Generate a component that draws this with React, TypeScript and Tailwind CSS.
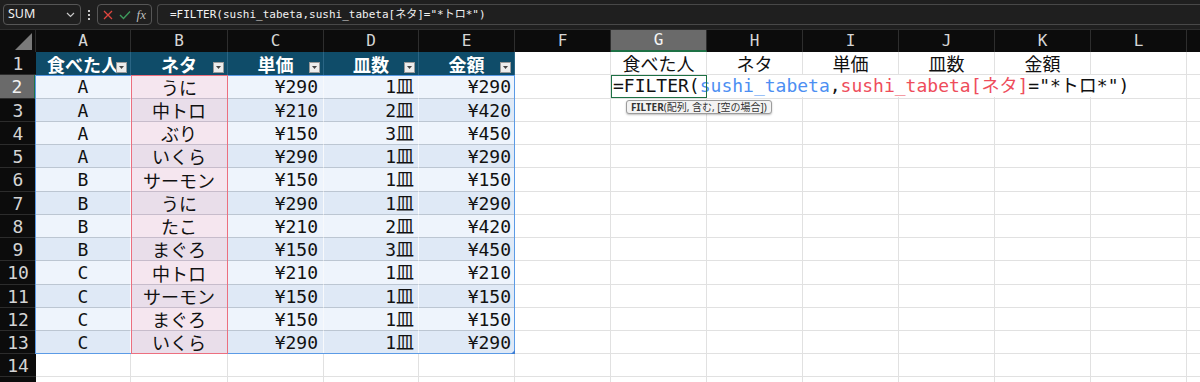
import React from 'react';

const mono = "font-['DejaVu_Sans_Mono','Noto_Sans_CJK_JP',monospace]";
const jp = "font-['Noto_Sans_CJK_JP','Noto_Sans',sans-serif]";

const W = [
  'w-[95px]', 'w-[97px]', 'w-[96px]', 'w-[95px]', 'w-[96px]', 'w-[96px]',
  'w-[96px]', 'w-[96px]', 'w-[96px]', 'w-[96px]', 'w-[96px]', 'w-[96px]',
];
const LETTERS = ['A', 'B', 'C', 'D', 'E', 'F', 'G', 'H', 'I', 'J', 'K', 'L'];

const DATA: [string, string, string, string, string][] = [
  ['A', 'うに', '¥290', '1皿', '¥290'],
  ['A', '中トロ', '¥210', '2皿', '¥420'],
  ['A', 'ぶり', '¥150', '3皿', '¥450'],
  ['A', 'いくら', '¥290', '1皿', '¥290'],
  ['B', 'サーモン', '¥150', '1皿', '¥150'],
  ['B', 'うに', '¥290', '1皿', '¥290'],
  ['B', 'たこ', '¥210', '2皿', '¥420'],
  ['B', 'まぐろ', '¥150', '3皿', '¥450'],
  ['C', '中トロ', '¥210', '1皿', '¥210'],
  ['C', 'サーモン', '¥150', '1皿', '¥150'],
  ['C', 'まぐろ', '¥150', '1皿', '¥150'],
  ['C', 'いくら', '¥290', '1皿', '¥290'],
];

const HEADERS = ['食べた人', 'ネタ', '単価', '皿数', '金額'];

const ROW_H = [
  'h-[23px]', 'h-[24px]', 'h-[23px]', 'h-[23px]', 'h-[23px]', 'h-[24px]', 'h-[23px]',
  'h-[23px]', 'h-[23px]', 'h-[24px]', 'h-[23px]', 'h-[23px]', 'h-[23px]', 'h-[23px]', 'h-[23px]',
];

function RowHeader({ n, active }: { n: number; active?: boolean }) {
  return (
    <div
      className={`w-[36px] shrink-0 flex items-center justify-center text-[18px] ${mono} ${
        active ? 'bg-[#6a6a6a] text-[#f2f2f2] border-r-2 border-r-[#1e7145]' : 'bg-[#0c0c0c] text-[#d4d4d4]'
      } border-b border-b-[#2c2c2c]`}
    >
      {n}
    </div>
  );
}

function FilterBtn() {
  return (
    <div className="absolute right-[3px] bottom-[2px] w-[11px] h-[11px] bg-[#ececec] border border-[#9a9a9a] flex items-center justify-center">
      <svg width="5" height="3" viewBox="0 0 5 3">
        <path d="M0 0 L5 0 L2.5 3 Z" fill="#444" />
      </svg>
    </div>
  );
}

function EmptyCell({ i }: { i: number }) {
  return <div className={`${W[i]} shrink-0 border-r border-b border-[#e1e1e1] bg-white`} />;
}

export default function App() {
  return (
    <div className="w-[1200px] h-[382px] overflow-hidden bg-white relative">
      {/* Formula bar */}
      <div className="h-[30px] bg-[#1f1f1f] flex items-center border-b border-[#2e2e2e]">
        <div className="ml-[3px] w-[78px] h-[21px] border border-[#565656] rounded-[4px] flex items-center justify-between px-[4px]">
          <span className="text-[12.5px] text-[#f0f0f0] font-['Noto_Sans',sans-serif] leading-none">SUM</span>
          <svg width="9" height="6" viewBox="0 0 9 6" className="mr-[1px]">
            <path d="M1 1 L4.5 4.5 L8 1" stroke="#c8c8c8" strokeWidth="1.2" fill="none" />
          </svg>
        </div>
        <div className="w-[16px] flex flex-col items-center justify-center gap-[2px]">
          <div className="w-[2px] h-[2px] bg-[#c8c8c8]" />
          <div className="w-[2px] h-[2px] bg-[#c8c8c8]" />
          <div className="w-[2px] h-[2px] bg-[#c8c8c8]" />
        </div>
        <div className="w-[55px] h-[21px] border border-[#565656] rounded-[4px] flex items-center justify-between px-[5px]">
          <svg width="10" height="10" viewBox="0 0 10 10">
            <path d="M1 1 L9 9 M9 1 L1 9" stroke="#e0463f" strokeWidth="1.3" />
          </svg>
          <svg width="12" height="10" viewBox="0 0 12 10">
            <path d="M1 5 L4.5 8.5 L11 1.5" stroke="#3e9a5c" strokeWidth="1.4" fill="none" />
          </svg>
          <span className="text-[13px] italic text-[#bdbdbd] font-['Liberation_Serif',serif] leading-none">fx</span>
        </div>
        <div className="ml-[5px] flex-1 h-[21px] border border-[#484848] rounded-l-[4px] border-r-0 flex items-center pl-[12px]">
          <span className={`text-[11px] text-[#f2f2f2] ${mono} whitespace-nowrap leading-none`}>
            =FILTER(sushi_tabeta,sushi_tabeta[ネタ]="*トロ*")
          </span>
        </div>
      </div>

      {/* Column headers */}
      <div className="h-[22px] flex bg-[#0c0c0c]">
        <div className="w-[36px] shrink-0 flex items-end justify-end pr-[3px] pb-[2px] border-r border-[#2c2c2c]">
          <svg width="17" height="17" viewBox="0 0 17 17">
            <path d="M17 0 L17 17 L0 17 Z" fill="#7a7a7a" />
          </svg>
        </div>
        {LETTERS.map((l, i) => (
          <div
            key={l}
            className={`${W[i]} shrink-0 flex items-center justify-center text-[16px] ${mono} border-r border-[#2e2e2e] ${
              l === 'G' ? 'bg-[#6a6a6a] text-[#f5f5f5] border-b-2 border-b-[#1e7145]' : 'text-[#d6d6d6]'
            }`}
          >
            {l}
          </div>
        ))}
        <div className="flex-1" />
      </div>

      {/* Grid rows */}
      <div className="relative">
        {/* Row 1 */}
        <div className={`flex ${ROW_H[0]}`}>
          <RowHeader n={1} />
          {HEADERS.map((h, i) => (
            <div
              key={h}
              className={`${W[i]} shrink-0 relative bg-[#0f4c69] text-white font-bold text-[18px] ${jp} flex items-center justify-center border-r border-[#2a6584] leading-none`}
            >
              {h}
              <FilterBtn />
            </div>
          ))}
          <EmptyCell i={5} />
          {HEADERS.map((h, i) => (
            <div
              key={'g' + h}
              className={`${W[i + 6]} shrink-0 flex items-center justify-center text-[18px] ${jp} text-[#111] border-r border-b border-[#e1e1e1] leading-none`}
            >
              {h}
            </div>
          ))}
          <EmptyCell i={11} />
          <div className="flex-1 border-b border-[#e1e1e1]" />
        </div>

        {/* Data rows */}
        {DATA.map((row, r) => {
          const light = r % 2 === 0;
          const bg = light ? 'bg-[#eef4fc]' : 'bg-[#dfe9f6]';
          const pink = light ? 'bg-[#f5e6ef]' : 'bg-[#e9deea]';
          const rowNum = r + 2;
          return (
            <div key={r} className={`flex ${ROW_H[r + 1]}`}>
              <RowHeader n={rowNum} active={rowNum === 2} />
              <div className={`${W[0]} shrink-0 ${bg} flex items-center justify-center text-[18px] ${mono} text-[#111] border-r border-r-[#f7f9fc] border-b border-b-[#bcc6d2]`}>
                {row[0]}
              </div>
              <div className={`${W[1]} shrink-0 ${pink} flex items-center justify-center text-[18px] ${jp} text-[#111] border-r border-r-[#f7f9fc] border-b border-b-[#c7bccb] leading-none`}>
                {row[1]}
              </div>
              <div className={`${W[2]} shrink-0 ${bg} flex items-center justify-end pr-[5px] text-[18px] ${mono} text-[#111] border-r border-r-[#f7f9fc] border-b border-b-[#bcc6d2]`}>
                {row[2]}
              </div>
              <div className={`${W[3]} shrink-0 ${bg} flex items-center justify-end pr-[4px] text-[18px] ${mono} text-[#111] border-r border-r-[#f7f9fc] border-b border-b-[#bcc6d2]`}>
                {row[3]}
              </div>
              <div className={`${W[4]} shrink-0 ${bg} flex items-center justify-end pr-[4px] text-[18px] ${mono} text-[#111] border-b border-b-[#bcc6d2]`}>
                {row[4]}
              </div>
              <EmptyCell i={5} />
              {rowNum === 2 ? (
                <div className={`${W[6]} shrink-0 relative border-b border-[#e1e1e1]`}>
                  <div className="absolute inset-0 border-[1.5px] border-[#1e7145] z-20 pointer-events-none" />
                  <div className={`absolute left-[1px] top-0 bottom-[1px] z-10 bg-white flex items-center pl-[1px] pr-[4px] whitespace-nowrap text-[18px] ${mono} text-[#111] leading-none`}>
                    <span>=FILTER(</span>
                    <span className="text-[#4d8ff2]">sushi_tabeta</span>
                    <span>,</span>
                    <span className="text-[#ee4d5b]">sushi_tabeta[ネタ]</span>
                    <span>="*トロ*")</span>
                  </div>
                </div>
              ) : (
                <EmptyCell i={6} />
              )}
              {[7, 8, 9, 10, 11].map((i) => (
                <EmptyCell key={i} i={i} />
              ))}
              <div className="flex-1 border-b border-[#e1e1e1]" />
            </div>
          );
        })}

        {/* Rows 14-15 */}
        {[14, 15].map((n) => (
          <div key={n} className={`flex ${ROW_H[n - 1]}`}>
            <RowHeader n={n} />
            {LETTERS.map((l, i) => (
              <EmptyCell key={l} i={i} />
            ))}
            <div className="flex-1 border-b border-[#e1e1e1]" />
          </div>
        ))}

        {/* Reference highlights */}
        <div className="absolute left-[35px] top-[23px] w-[480px] h-[279px] border border-[#5b9be6] pointer-events-none" />
        <div className="absolute left-[131px] top-[23px] w-[97px] h-[279px] border border-[#ec6f7f] pointer-events-none" />
        <div className="absolute left-[511px] top-[298px] w-0 h-0 border-l-[4px] border-l-transparent border-b-[4px] border-b-[#3d7fd6]" />

        {/* Tooltip */}
        <div className="absolute left-[626px] top-[48px] h-[14px] px-[4px] bg-[#f3f3f3] border border-[#9c9c9c] rounded-[3px] shadow-[0_1px_2px_rgba(0,0,0,0.25)] flex items-center z-30">
          <span className="text-[10px] text-[#333] font-['Noto_Sans','Noto_Sans_CJK_JP',sans-serif] leading-none whitespace-nowrap">
            <b>FILTER</b>(配列, 含む, [空の場合])
          </span>
        </div>
      </div>
    </div>
  );
}
